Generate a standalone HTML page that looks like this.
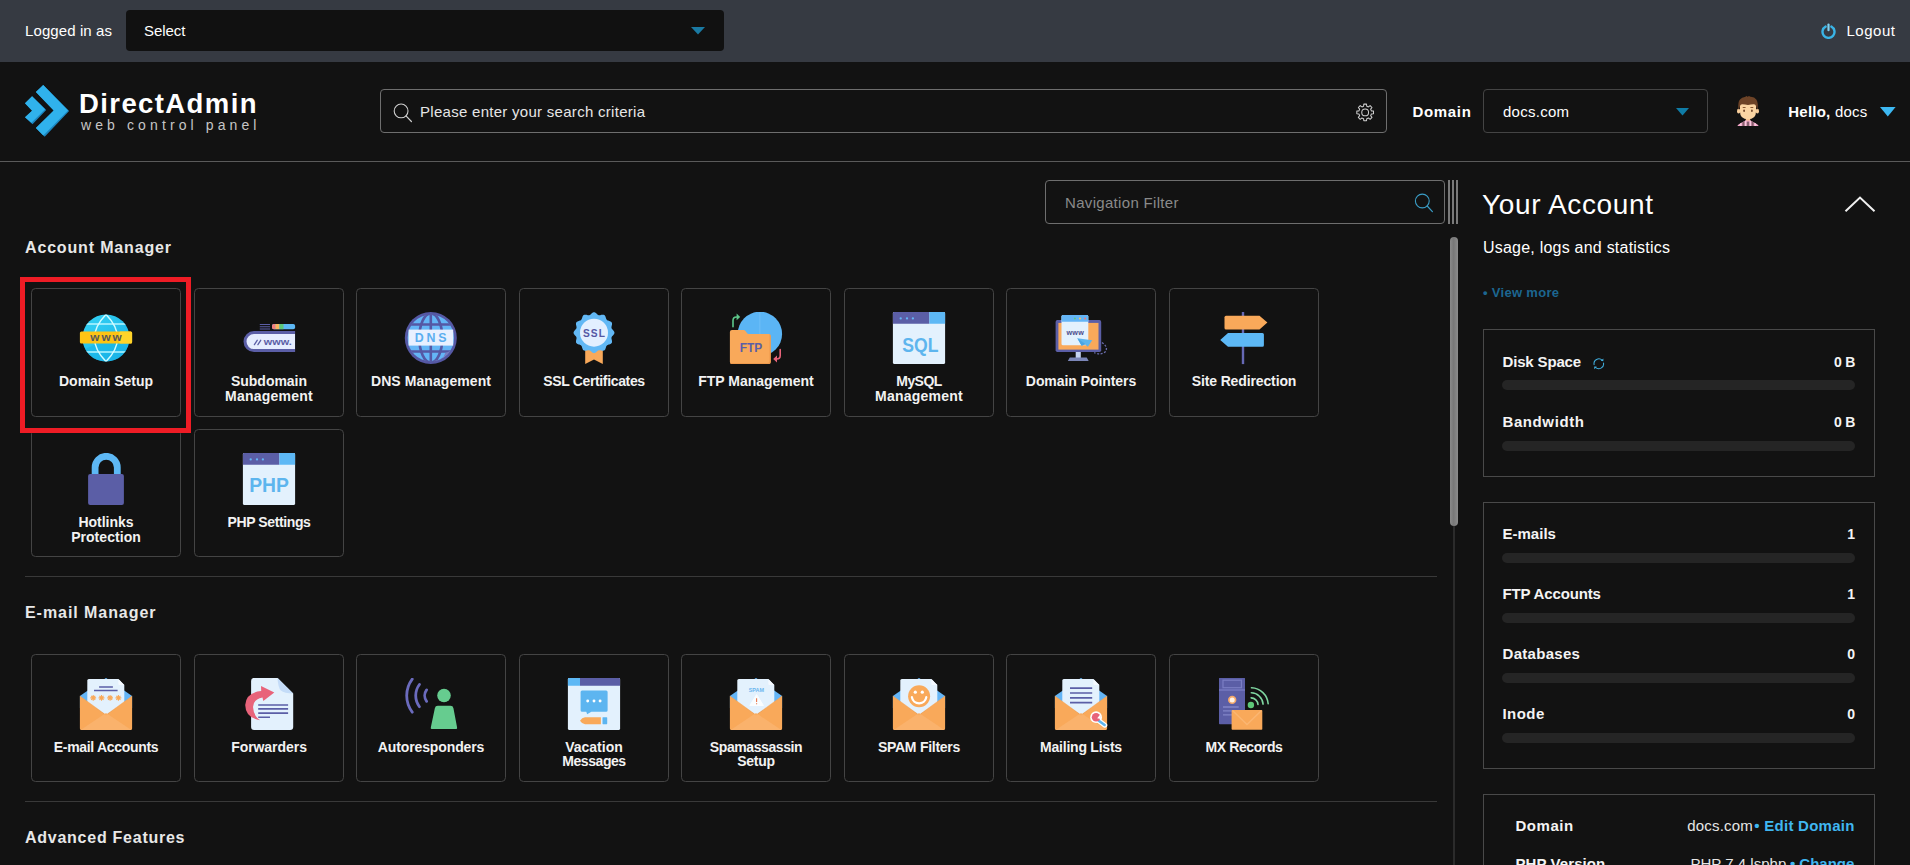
<!DOCTYPE html>
<html lang="en">
<head>
<meta charset="utf-8">
<title>DirectAdmin</title>
<style>
*{box-sizing:border-box;margin:0;padding:0}
html,body{width:1910px;height:865px;overflow:hidden;background:#121212;color:#fff;font-family:"Liberation Sans","DejaVu Sans",sans-serif;}
.abs{position:absolute}
.t{position:absolute;white-space:nowrap;line-height:1}
#topbar{position:absolute;left:0;top:0;width:1910px;height:62px;background:#363a42}
#selbox{position:absolute;left:126px;top:10px;width:598px;height:41px;background:#111;border-radius:4px}
#header{position:absolute;left:0;top:62px;width:1910px;height:100px;background:#121212;border-bottom:1px solid #5a5a5a}
#search{position:absolute;left:380px;top:89px;width:1007px;height:44px;border:1px solid #6e6e6e;border-radius:4px}
#domsel{position:absolute;left:1483px;top:89px;width:225px;height:44px;border:1px solid #444;border-radius:4px}
#navf{position:absolute;left:1045px;top:180px;width:400px;height:44px;border:1px solid #6e6e6e;border-radius:4px}
.tile{position:absolute;width:150px;height:129px;border:1px solid #444;border-radius:4.5px;background:#121212}
.tile .lbl{position:absolute;left:0;width:148px;top:85.2px;text-align:center;font-weight:bold;font-size:14px;line-height:14px;color:#f2f2f2}
.tile svg{position:absolute;left:47px;top:23px;width:54px;height:54px}
.sec{position:absolute;left:25px;font-weight:bold;font-size:16px;letter-spacing:.6px;color:#e8e8e8;white-space:nowrap;line-height:1}
.hr{position:absolute;left:25px;width:1412px;height:1px;background:#393939}
#redbox{position:absolute;left:20px;top:277px;width:171px;height:156px;border:5px solid #ee1c25}
.box{position:absolute;left:1483px;width:392px;border:1px solid #494949}
.bar{position:absolute;width:353px;height:10px;border-radius:5px;background:#252525}
.pl{font-weight:bold;font-size:15px;color:#f4f4f4}
.pv{font-weight:bold;font-size:14px;color:#f4f4f4}
.bl{position:absolute;left:19px;font-weight:bold;font-size:15px;line-height:1;white-space:nowrap;color:#f4f4f4}
.br{position:absolute;right:19px;font-weight:bold;font-size:13px;line-height:1;white-space:nowrap;color:#f4f4f4}
#lia{letter-spacing:0.099px}#seltxt{letter-spacing:-0.041px}#logout{letter-spacing:0.522px}#sph{letter-spacing:0.283px}#domlbl{letter-spacing:0.697px}#domtxt{letter-spacing:0.257px}#hello{letter-spacing:0.23px}#navtxt{letter-spacing:0.319px}#ya{letter-spacing:0.638px}#usage{letter-spacing:0.223px}#vm{letter-spacing:0.303px}#s1{letter-spacing:0.839px}#s2{letter-spacing:0.941px}#s3{letter-spacing:0.743px}#L_domain_0{letter-spacing:-0.011px}#L_subdomain_0{letter-spacing:-0.029px}#L_subdomain_1{letter-spacing:0.236px}#L_dns_0{letter-spacing:0.075px}#L_ssl_0{letter-spacing:-0.342px}#L_ftp_0{letter-spacing:-0.004px}#L_mysql_0{letter-spacing:-0.559px}#L_mysql_1{letter-spacing:0.236px}#L_pointers_0{letter-spacing:-0.061px}#L_redirect_0{letter-spacing:-0.126px}#L_hotlink_0{letter-spacing:-0.033px}#L_hotlink_1{letter-spacing:0.052px}#L_php_0{letter-spacing:-0.387px}#L_email_0{letter-spacing:-0.312px}#L_forward_0{letter-spacing:-0.05px}#L_autoresp_0{letter-spacing:-0.117px}#L_vacation_0{letter-spacing:-0.013px}#L_vacation_1{letter-spacing:-0.434px}#L_spamass_0{letter-spacing:-0.418px}#L_spamass_1{letter-spacing:-0.298px}#L_spamf_0{letter-spacing:-0.265px}#L_mlist_0{letter-spacing:-0.233px}#L_mx_0{letter-spacing:-0.402px}#disk{letter-spacing:-0.161px}#bw{letter-spacing:0.593px}#ob1{letter-spacing:-0.248px}#ob2{letter-spacing:-0.248px}#emails{letter-spacing:0.007px}#ftpacc{letter-spacing:-0.147px}#dbs{letter-spacing:0.294px}#inode{letter-spacing:0.45px}#dom3{letter-spacing:0.517px}#docscom{letter-spacing:0.185px}#editdom{letter-spacing:0.265px}#phpver{letter-spacing:0.076px}#php74{letter-spacing:0.023px}#change{letter-spacing:0.009px}#lg1{letter-spacing:1.4px}#lg2{letter-spacing:4.109px}
</style>
</head>
<body>
<div id="topbar">
  <div class="t" id="lia" style="left:25px;top:23px;font-size:15px">Logged in as</div>
  <div id="selbox"><div class="t" id="seltxt" style="left:18px;top:13px;font-size:15px">Select</div>
    <svg class="abs" style="left:565px;top:17px" width="14" height="8" viewBox="0 0 14 8"><path d="M0 0h14L7 7.5z" fill="#1a7aa3"/></svg>
  </div>
  <svg class="abs" style="left:1820px;top:22.200px" width="17" height="17" viewBox="0 0 17 17"><path d="M5.6 4.6A6 6 0 1 0 11.4 4.6" fill="none" stroke="#3ab4e6" stroke-width="2.4" stroke-linecap="round"/><path d="M8.500 2.600V8.200" stroke="#7fd0f0" stroke-width="2.2" stroke-linecap="round"/></svg>
  <div class="t" id="logout" style="left:1846.5px;top:23px;font-size:15px">Logout</div>
</div>
<div id="header"></div>
<div id="search"><svg class="abs" style="left:10px;top:11px" width="24" height="24" viewBox="0 0 24 24"><circle cx="10.1" cy="9.9" r="6.9" fill="none" stroke="#cfcfcf" stroke-width="1.1"/><path d="M15 14.9l5.4 5.6" stroke="#cfcfcf" stroke-width="1.2" stroke-linecap="round"/></svg>
<svg class="abs" style="left:973.3px;top:10.7px" width="23.3" height="23.3" viewBox="0 0 24 24"><g fill="none" stroke="#d0d0d0" stroke-width="1.05" stroke-linejoin="round"><circle cx="11.5" cy="11.8" r="3.5"/><path d="M9.87 5.41 L10.11 3.21 L12.89 3.21 L13.13 5.41 L14.87 6.12 L16.59 4.75 L18.55 6.71 L17.18 8.43 L17.89 10.17 L20.09 10.41 L20.09 13.19 L17.89 13.43 L17.18 15.17 L18.55 16.89 L16.59 18.85 L14.87 17.48 L13.13 18.19 L12.89 20.39 L10.11 20.39 L9.87 18.19 L8.13 17.48 L6.41 18.85 L4.45 16.89 L5.82 15.17 L5.11 13.43 L2.91 13.19 L2.91 10.41 L5.11 10.17 L5.82 8.43 L4.45 6.71 L6.41 4.75 L8.13 6.12Z"/></g></svg><div class="t" id="sph" style="left:39px;top:14px;font-size:15px;color:#e6e6e6">Please enter your search criteria</div></div>
<div class="t" id="domlbl" style="left:1412.4px;top:104px;font-size:15px;font-weight:bold">Domain</div>
<div id="domsel"><svg class="abs" style="left:192px;top:17.5px" width="13" height="8" viewBox="0 0 13 8"><path d="M0 0h13L6.5 7.5z" fill="#0f7ca6"/></svg><div class="t" id="domtxt" style="left:19px;top:14px;font-size:15px">docs.com</div></div>
<div class="t" id="hello" style="left:1788.3px;top:104px;font-size:15px"><b>Hello,</b> docs</div>

<svg class="abs" style="left:1880px;top:106.5px" width="16" height="10" viewBox="0 0 16 10"><path d="M0 0h15.6L7.8 9.6z" fill="#3db8f2"/></svg>
<svg class="abs" style="left:1737px;top:96px" width="22" height="30" viewBox="0 0 22 30"><defs><clipPath id="shirtc"><path d="M0.2 30.2Q1 28.5 3.5 27.2L8.6 24.4h4.8l5.1 2.8Q21 28.5 21.8 30.2z"/></clipPath></defs>
<ellipse cx="1.6" cy="15.2" rx="1.6" ry="2.4" fill="#f9cf9c"/><ellipse cx="20.4" cy="15.2" rx="1.6" ry="2.4" fill="#f9cf9c"/>
<path d="M8.8 21h4.4v4.2h-4.4z" fill="#f6c18e"/>
<path d="M3 9.5Q3 7.6 5 7.6h12Q19 7.6 19 9.5V16Q19 23.2 11 23.2Q3 23.2 3 16z" fill="#fbd5a3"/>
<path d="M1.4 13.6Q0.6 6 3 3.4Q5 .8 8 .9L9.4.1l1.2.6L12 0l1.4.8Q17.400 .6 19.3 3.400Q21.400 6.400 20.600 13.600Q19.600 13 19.200 10.400Q19 8.200 16.800 8.200Q14 8.200 11 9Q8 8.200 5.200 8.200Q3 8.200 2.800 10.400Q2.400 13 1.400 13.600z" fill="#6d4327"/>
<rect x="5.6" y="11" width="3.1" height="1" rx=".5" fill="#8a5a34"/><rect x="13.3" y="11" width="3.1" height="1" rx=".5" fill="#8a5a34"/>
<ellipse cx="7.1" cy="14.7" rx=".9" ry="1.3" fill="#6d4327"/><ellipse cx="14.900" cy="14.700" rx=".9" ry="1.3" fill="#6d4327"/>
<g clip-path="url(#shirtc)"><rect x="0" y="24" width="22" height="7" fill="#f3a7c9"/><rect x="5.3" y="24" width="2.200" height="7" fill="#86606e"/><rect x="9.7" y="25.6" width="2.6" height="6" fill="#86606e"/><rect x="14.500" y="24" width="2.200" height="7" fill="#86606e"/><rect x="3.2" y="24" width="1" height="7" fill="#fbd3e4"/><rect x="8.2" y="24" width="1" height="7" fill="#fbd3e4"/><rect x="12.8" y="24" width="1" height="7" fill="#fbd3e4"/><rect x="17.8" y="24" width="1" height="7" fill="#fbd3e4"/></g>
</svg>
<svg class="abs" style="left:22px;top:82px" width="50" height="58" viewBox="22 82 50 58"><path d="M32.100 96.300L46.200 110 32.500 124.200 25 117.300 32.100 110.800 25 103.200z" fill="#1c86c0"/><path d="M32.100 96.300L45.100 109.200 31.400 122.800 25 117.300 32.100 110.800 25 103.200z" fill="#30b2ec"/>
<path d="M43.200 85L69.100 111 44.700 136.800 35.900 128 53.700 110.400 35.900 92.100z" fill="#1c86c0"/><path d="M43.200 85L68 110.400 43.300 135.400 35.900 128 53.700 110.400 35.900 92.100z" fill="#30b2ec"/></svg>
<div class="t" id="lg1" style="left:79px;top:90.2px;font-size:27.5px;font-weight:bold;color:#fff">DirectAdmin</div>
<div class="t" id="lg2" style="left:81px;top:118px;font-size:14px;color:#c6c6c6">web control panel</div>
<div id="navf"><svg class="abs" style="left:366px;top:10px" width="24" height="24" viewBox="0 0 24 24"><circle cx="10.3" cy="10" r="6.9" fill="none" stroke="#3a9dc6" stroke-width="1.1"/><path d="M15.2 15l5.2 5.6" stroke="#3a9dc6" stroke-width="1.2" stroke-linecap="round"/></svg><div class="t" id="navtxt" style="left:19px;top:14px;font-size:15px;color:#8a8a8a">Navigation Filter</div></div>

<div class="abs" style="left:1448px;top:180px;width:2px;height:44px;background:#7a7a7a"></div>
<div class="abs" style="left:1452px;top:180px;width:2px;height:44px;background:#7a7a7a"></div>
<div class="abs" style="left:1456px;top:180px;width:2px;height:44px;background:#7a7a7a"></div>
<div class="abs" style="left:1453px;top:237px;width:2px;height:628px;background:#2b2b2b"></div>
<div class="abs" style="left:1450.3px;top:237px;width:7.6px;height:289px;border-radius:4px;background:linear-gradient(90deg,#8a8a8a,#787878 45%,#8c8c8c)"></div>
<svg class="abs" style="left:1842px;top:193px" width="36" height="22" viewBox="0 0 36 22"><path d="M3.5 18.3L18 4.6 32.5 18.3" fill="none" stroke="#f0f0f0" stroke-width="2"/></svg>
<div class="sec" id="s1" style="top:239.6px">Account Manager</div>
<div class="hr" style="top:576px"></div>
<div class="sec" id="s2" style="top:604.7px">E-mail Manager</div>
<div class="hr" style="top:801px"></div>
<div class="sec" id="s3" style="top:829.5px">Advanced Features</div>

<div id="tiles">
<div class="tile" style="left:31px;top:288px;height:129px"><svg viewBox="0 0 54 54"><defs><clipPath id="gc1"><circle cx="27" cy="26" r="23.600"/></clipPath><linearGradient id="gg1" x1="0" y1="0" x2="1" y2="1"><stop offset="0" stop-color="#35d3f5"/><stop offset="1" stop-color="#18b0e6"/></linearGradient></defs>
<circle cx="27" cy="26" r="23.600" fill="url(#gg1)"/>
<g clip-path="url(#gc1)"><path d="M0 40L30 26 54 40V54H0z" fill="#19b4e8" opacity=".6"/><path d="M0 12h54M0 40h54" stroke="#b5f5ff" stroke-width="1.700"/><path d="M27 2.400Q50 26 27 49.600Q4 26 27 2.400z" fill="none" stroke="#d2fbff" stroke-width="1.400"/></g>
<rect x=".9" y="19.600" width="52.200" height="11.800" rx="1.500" fill="#ffc414"/><rect x="40" y="19.600" width="13.100" height="11.800" rx="1.500" fill="#ffd42a"/>
<text x="28" y="29.300" text-anchor="middle" font-family="Liberation Sans,sans-serif" font-weight="bold" font-size="11.800" letter-spacing="2" fill="#595959">www</text></svg><div class="lbl" style="top:84.5px;line-height:15px"><span id="L_domain_0">Domain Setup</span></div></div>
<div class="tile" style="left:194px;top:288px;height:129px"><svg viewBox="0 0 54 54"><path d="M54.600 20.600H12A9 9 0 0 0 12 38.600H54.600z" fill="#e6edff" stroke="#5b5ea6" stroke-width="3"/>
<rect x="53.100" y="19" width="3" height="21.500" fill="#121212"/>
<path d="M17.800 12.500h10.200M17.800 14.800h10.200M17.800 17h10.200" stroke="#5b5ea6" stroke-width="1.100"/>
<rect x="30" y="12" width="23.100" height="5.200" rx="1.800" fill="#5db8f5"/><path d="M31.800 12h1.700v5.200h-1.700a1.800 1.800 0 0 1-1.800-1.800v-1.600a1.800 1.800 0 0 1 1.800-1.800z" fill="#f27c7c"/><rect x="33.500" y="12" width="4" height="5.200" fill="#f9b55f"/><rect x="37.500" y="12" width="4" height="5.200" fill="#5dc878"/>
<path d="M12.400 32.600L15.200 28.300M15.900 32.600L18.700 28.300" stroke="#5b5ea6" stroke-width="1.300" stroke-linecap="round"/><text x="21.800" y="32.700" font-family="Liberation Sans,sans-serif" font-weight="bold" font-size="8.600" textLength="28" lengthAdjust="spacingAndGlyphs" fill="#5b5ea6">www.</text></svg><div class="lbl" style="top:84.5px;line-height:15px"><span id="L_subdomain_0">Subdomain</span><br><span id="L_subdomain_1">Management</span></div></div>
<div class="tile" style="left:356px;top:288px;height:129px"><svg viewBox="0 0 54 54"><defs><clipPath id="dc1"><circle cx="26.800" cy="26" r="23.500"/></clipPath></defs>
<circle cx="26.800" cy="26" r="26" fill="#5558a4"/><circle cx="26.800" cy="26" r="23.200" fill="#64b5f6"/>
<g clip-path="url(#dc1)" fill="none" stroke="#5558a4" stroke-width="2.600"><path d="M26.800 0v52M0 12.500h54M0 39.500h54"/><ellipse cx="26.800" cy="26" rx="11.500" ry="24.500"/><path d="M30 50Q40 49 42 42Q46 40 50 39" stroke="#7a7cc0" stroke-width="2"/></g>
<rect x="4.600" y="17.600" width="44.600" height="16" fill="#e8f0ff"/>
<text x="28" y="30.200" text-anchor="middle" font-family="Liberation Sans,sans-serif" font-weight="bold" font-size="12.400" letter-spacing="2.700" fill="#5aaef0">DNS</text></svg><div class="lbl" style="top:84.5px;line-height:15px"><span id="L_dns_0">DNS Management</span></div></div>
<div class="tile" style="left:519px;top:288px;height:129px"><svg viewBox="0 0 54 54"><path d="M18.200 36h17.600v16.100L27 47.600 18.200 52.100z" fill="#f9a95a"/>
<path d="M27.00 0.25L27.53 0.31L28.06 0.50L28.57 0.79L29.05 1.15L29.52 1.57L29.96 1.99L30.39 2.39L30.82 2.73L31.25 3.00L31.70 3.17L32.17 3.24L32.68 3.23L33.22 3.14L33.79 3.01L34.39 2.87L34.99 2.74L35.60 2.67L36.18 2.67L36.73 2.78L37.22 2.99L37.66 3.31L38.02 3.73L38.31 4.24L38.55 4.80L38.75 5.39L38.92 5.98L39.10 6.54L39.29 7.05L39.53 7.49L39.83 7.87L40.21 8.17L40.65 8.41L41.16 8.60L41.72 8.78L42.31 8.95L42.90 9.15L43.46 9.39L43.97 9.68L44.39 10.04L44.71 10.47L44.92 10.97L45.03 11.52L45.03 12.10L44.96 12.71L44.83 13.31L44.69 13.91L44.56 14.48L44.47 15.02L44.46 15.53L44.53 16.00L44.70 16.45L44.97 16.88L45.31 17.31L45.71 17.74L46.13 18.18L46.55 18.65L46.91 19.13L47.20 19.64L47.39 20.17L47.45 20.70L47.39 21.23L47.20 21.76L46.91 22.27L46.55 22.75L46.13 23.22L45.71 23.66L45.31 24.09L44.97 24.52L44.70 24.95L44.53 25.40L44.46 25.87L44.47 26.38L44.56 26.92L44.69 27.49L44.83 28.09L44.96 28.69L45.03 29.30L45.03 29.88L44.92 30.43L44.71 30.92L44.39 31.36L43.97 31.72L43.46 32.01L42.90 32.25L42.31 32.45L41.72 32.62L41.16 32.80L40.65 32.99L40.21 33.23L39.83 33.53L39.53 33.91L39.29 34.35L39.10 34.86L38.92 35.42L38.75 36.01L38.55 36.60L38.31 37.16L38.02 37.67L37.66 38.09L37.22 38.41L36.73 38.62L36.18 38.73L35.60 38.73L34.99 38.66L34.39 38.53L33.79 38.39L33.22 38.26L32.68 38.17L32.17 38.16L31.70 38.23L31.25 38.40L30.82 38.67L30.39 39.01L29.96 39.41L29.52 39.83L29.05 40.25L28.57 40.61L28.06 40.90L27.53 41.09L27.00 41.15L26.47 41.09L25.94 40.90L25.43 40.61L24.95 40.25L24.48 39.83L24.04 39.41L23.61 39.01L23.18 38.67L22.75 38.40L22.30 38.23L21.83 38.16L21.32 38.17L20.78 38.26L20.21 38.39L19.61 38.53L19.01 38.66L18.40 38.73L17.82 38.73L17.27 38.62L16.78 38.41L16.34 38.09L15.98 37.67L15.69 37.16L15.45 36.60L15.25 36.01L15.08 35.42L14.90 34.86L14.71 34.35L14.47 33.91L14.17 33.53L13.79 33.23L13.35 32.99L12.84 32.80L12.28 32.62L11.69 32.45L11.10 32.25L10.54 32.01L10.03 31.72L9.61 31.36L9.29 30.93L9.08 30.43L8.97 29.88L8.97 29.30L9.04 28.69L9.17 28.09L9.31 27.49L9.44 26.92L9.53 26.38L9.54 25.87L9.47 25.40L9.30 24.95L9.03 24.52L8.69 24.09L8.29 23.66L7.87 23.22L7.45 22.75L7.09 22.27L6.80 21.76L6.61 21.23L6.55 20.70L6.61 20.17L6.80 19.64L7.09 19.13L7.45 18.65L7.87 18.18L8.29 17.74L8.69 17.31L9.03 16.88L9.30 16.45L9.47 16.00L9.54 15.53L9.53 15.02L9.44 14.48L9.31 13.91L9.17 13.31L9.04 12.71L8.97 12.10L8.97 11.52L9.08 10.97L9.29 10.47L9.61 10.04L10.03 9.68L10.54 9.39L11.10 9.15L11.69 8.95L12.28 8.78L12.84 8.60L13.35 8.41L13.79 8.17L14.17 7.87L14.47 7.49L14.71 7.05L14.90 6.54L15.08 5.98L15.25 5.39L15.45 4.80L15.69 4.24L15.98 3.73L16.34 3.31L16.78 2.99L17.27 2.78L17.82 2.67L18.40 2.67L19.01 2.74L19.61 2.87L20.21 3.01L20.78 3.14L21.32 3.23L21.83 3.24L22.30 3.17L22.75 3.00L23.18 2.73L23.61 2.39L24.04 1.99L24.48 1.57L24.95 1.15L25.43 0.79L25.94 0.50L26.47 0.31Z" fill="#62b8f5"/>
<circle cx="27" cy="20.7" r="14" fill="#e3efff"/>
<text x="27.500" y="24.500" text-anchor="middle" font-family="Liberation Sans,sans-serif" font-weight="bold" font-size="10.200" letter-spacing="1" fill="#5558a4">SSL</text></svg><div class="lbl" style="top:84.5px;line-height:15px"><span id="L_ssl_0">SSL Certificates</span></div></div>
<div class="tile" style="left:681px;top:288px;height:129px"><svg viewBox="0 0 54 54"><circle cx="30.900" cy="21.900" r="22.200" fill="#5bb5f5"/><path d="M30.900 0v30" stroke="#74c1f7" stroke-width=".8"/>
<path d="M.9 20a2 2 0 0 1 2-2h11.600a2.500 2.500 0 0 1 2 1l1.600 2.200a2 2 0 0 0 1.600.8H39.700a2 2 0 0 1 2 2V50.100a2 2 0 0 1-2 2H2.900a2 2 0 0 1-2-2z" fill="#f9a95a"/><path d="M40.500 22.200a2 2 0 0 1 1.200 1.800V50.100a2 2 0 0 1-2 2H2.900a2 2 0 0 1-1.800-1.100H38.500a2 2 0 0 0 2-2z" fill="#ef9a4c"/>
<text x="22" y="40.400" text-anchor="middle" font-family="Liberation Sans,sans-serif" font-weight="bold" font-size="13.200" textLength="22.500" lengthAdjust="spacingAndGlyphs" fill="#5b5ea6">FTP</text>
<path d="M4 14.800V8.500Q4 5 7.500 5H9" fill="none" stroke="#5dc88a" stroke-width="1.600" stroke-linecap="round"/><path d="M7.600 1.400L11.200 4.900 7.600 8.200z" fill="#5dc88a"/>
<path d="M51.200 37.600V43.500Q51.200 47 47.700 47H46.800" fill="none" stroke="#e8637a" stroke-width="1.600" stroke-linecap="round"/><path d="M48 43.600L44.200 47 48 50.400z" fill="#e8637a"/></svg><div class="lbl" style="top:84.5px;line-height:15px"><span id="L_ftp_0">FTP Management</span></div></div>
<div class="tile" style="left:844px;top:288px;height:129px"><svg viewBox="0 0 54 54"><rect x=".9" y="-.1" width="52.200" height="52.200" rx="1.600" fill="#e3f1fd"/><path d="M.9 11.700V1.500A1.600 1.600 0 0 1 2.500-.1H37.400V11.700z" fill="#5b5ea6"/><path d="M37.400-.1H51.500A1.600 1.600 0 0 1 53.100 1.500V11.700H37.400z" fill="#5db8f5"/>
<circle cx="8.700" cy="6.400" r="1.150" fill="#64b5f6"/><circle cx="15" cy="6.400" r="1.150" fill="#64b5f6"/><circle cx="20.900" cy="6.400" r="1.150" fill="#64b5f6"/>
<text x="10.300" y="39.500" font-family="Liberation Sans,sans-serif" font-weight="bold" font-size="20.500" textLength="36.200" lengthAdjust="spacingAndGlyphs" fill="#5db5ee">SQL</text></svg><div class="lbl" style="top:84.5px;line-height:15px"><span id="L_mysql_0">MySQL</span><br><span id="L_mysql_1">Management</span></div></div>
<div class="tile" style="left:1006px;top:288px;height:129px"><svg viewBox="0 0 54 54"><rect x="21.700" y="39" width="5.100" height="7" fill="#c5d3f0"/><path d="M15.800 45.500h16.900l2 3.500H13.800z" fill="#7b86b8"/>
<rect x="1.600" y="8.100" width="45.600" height="31.900" rx="1.800" fill="#5b5ea6"/><rect x="4.400" y="10.900" width="40.100" height="26.700" fill="#f9a95a"/>
<rect x="7.500" y="3" width="26.800" height="30.300" rx="1.500" fill="#e3f1fd"/><path d="M7.500 9.700V4.500A1.500 1.500 0 0 1 9 3H32.800a1.500 1.500 0 0 1 1.500 1.500V9.700z" fill="#64b5f6"/>
<circle cx="20.900" cy="6.500" r="1" fill="#5dc88a"/><circle cx="26" cy="6.500" r="1" fill="#f9c35f"/><circle cx="31.100" cy="6.500" r="1" fill="#f27c7c"/>
<text x="21.300" y="23" text-anchor="middle" font-family="Liberation Sans,sans-serif" font-weight="bold" font-size="7.200" letter-spacing=".3" fill="#4a4d8a">www</text>
<path d="M23.300 26.200L38.200 28.200 33.900 34.800 31.200 32.300 27.600 33.700z" fill="#5db5ee"/><path d="M23.300 26.200L33.900 34.800 31.200 32.300z" fill="#3d96d6"/><path d="M23.300 26.200L31.200 32.300 27.600 33.700z" fill="#4aa5e4"/>
<path d="M48 30.500Q54.500 35 51.500 39.500Q48 43.500 40.200 40.700" fill="none" stroke="#6b6eae" stroke-width="1.300" stroke-dasharray="2 1.600"/></svg><div class="lbl" style="top:84.5px;line-height:15px"><span id="L_pointers_0">Domain Pointers</span></div></div>
<div class="tile" style="left:1169px;top:288px;height:129px"><svg viewBox="0 0 54 54"><rect x="24.800" y="-.1" width="2.400" height="52.200" fill="#6668b4"/>
<path d="M9 3.800H42.500L50.400 10.600 42.500 17.500H9A1.500 1.500 0 0 1 7.500 16V5.300A1.500 1.500 0 0 1 9 3.800z" fill="#f9a95a"/>
<path d="M45.400 21H11L3.200 27.900 11 34.800H45.400a1.500 1.500 0 0 0 1.500-1.500V22.500a1.500 1.500 0 0 0-1.500-1.500z" fill="#5db8f5"/></svg><div class="lbl" style="top:84.5px;line-height:15px"><span id="L_redirect_0">Site Redirection</span></div></div>
<div class="tile" style="left:31px;top:429px;height:128px"><svg viewBox="0 0 54 54"><path d="M16.100 23V14.400a11.100 11.100 0 0 1 22.200 0V23" fill="none" stroke="#5db8f5" stroke-width="6.800"/>
<rect x="9.100" y="21.100" width="35.800" height="31" rx="2" fill="#5b5ea6"/></svg><div class="lbl" style="top:84.5px;line-height:15px"><span id="L_hotlink_0">Hotlinks</span><br><span id="L_hotlink_1">Protection</span></div></div>
<div class="tile" style="left:194px;top:429px;height:128px"><svg viewBox="0 0 54 54"><rect x=".9" y="-.1" width="52.200" height="52.200" rx="1.600" fill="#e3f1fd"/><path d="M.9 11.700V1.500A1.600 1.600 0 0 1 2.500-.1H37.400V11.700z" fill="#5b5ea6"/><path d="M37.400-.1H51.500A1.600 1.600 0 0 1 53.100 1.500V11.700H37.400z" fill="#5db8f5"/>
<circle cx="8.700" cy="6.400" r="1.150" fill="#64b5f6"/><circle cx="15" cy="6.400" r="1.150" fill="#64b5f6"/><circle cx="20.900" cy="6.400" r="1.150" fill="#64b5f6"/>
<text x="7.200" y="39.200" font-family="Liberation Sans,sans-serif" font-weight="bold" font-size="20" textLength="39.700" lengthAdjust="spacingAndGlyphs" fill="#5db5ee">PHP</text></svg><div class="lbl" style="top:84.5px;line-height:15px"><span id="L_php_0">PHP Settings</span></div></div>
<div class="tile" style="left:31px;top:654px;height:128px"><svg viewBox="0 0 54 54"><defs><clipPath id="ece"><path d="M0-2H54V19L27 37.200 0 19z"/></clipPath></defs>
<path d="M.9 18L27-.1 53.100 18V30H.9z" fill="#64b5f6"/>
<g clip-path="url(#ece)"><path d="M9.800 1H39.400L45.300 6.900V40H8.300V2.500A1.500 1.500 0 0 1 9.800 1z" fill="#e3f1fd"/><path d="M39.400 1L45.300 6.900H40.400a1 1 0 0 1-1-1z" fill="#f4f9ff"/><path d="M20.100 8.900H33.900M15 12.400H38.600" stroke="#5b5ea6" stroke-width="1.500"/><path d="M11.30 19.90L17.10 19.90M12.15 17.85L16.25 21.95M14.20 17.00L14.20 22.80M16.25 17.85L12.15 21.95M19.60 19.90L25.40 19.90M20.45 17.85L24.55 21.95M22.50 17.00L22.50 22.80M24.55 17.85L20.45 21.95M28.20 19.90L34.00 19.90M29.05 17.85L33.15 21.95M31.10 17.00L31.10 22.80M33.15 17.85L29.05 21.95M36.50 19.90L42.30 19.90M37.35 17.85L41.45 21.95M39.40 17.00L39.40 22.80M41.45 17.85L37.35 21.95" stroke="#f9a95a" stroke-width="1.100"/></g>
<path d="M.9 18L27 37 53.100 18V50.600a1.500 1.500 0 0 1-1.500 1.500H2.400A1.500 1.500 0 0 1 .9 50.600z" fill="#f9a95a"/>
<path d="M2 51.800L27 35 52 51.800a1.500 1.500 0 0 1-.4.300H2.400a1.500 1.500 0 0 1-.4-.300z" fill="#fab26c"/>
<path d="M.9 18L27 37 53.100 18" fill="none" stroke="#f6a252" stroke-width=".5"/>
</svg><div class="lbl" style="top:85px;line-height:14px"><span id="L_email_0">E-mail Accounts</span></div></div>
<div class="tile" style="left:194px;top:654px;height:128px"><svg viewBox="0 0 54 54"><path d="M12.100-.1H35.500L51.200 15.600V49.100a3 3 0 0 1-3 3H12.100a3 3 0 0 1-3-3V2.900a3 3 0 0 1 3-3z" fill="#e3f1fd"/><path d="M35.500-.1L51.200 15.600Q42.500 15.200 38.800 12.400Q36 9.500 35.500-.1z" fill="#c4dcf8"/>
<path d="M16.200 27H46.100M16.200 30.900H46.100M16.200 35.100H46.100M16.200 39.200H28" stroke="#5b5ea6" stroke-width="1.600"/>
<path d="M18.200 42.300Q3.500 40 3.200 27Q4 14.500 19.200 13L19 8.100 32.300 14.400 21.300 23 20.500 19.500Q11.500 21 11 29Q11.500 38 18.200 42.300z" fill="#e8637a"/></svg><div class="lbl" style="top:85px;line-height:14px"><span id="L_forward_0">Forwarders</span></div></div>
<div class="tile" style="left:356px;top:654px;height:128px"><svg viewBox="0 0 54 54"><path d="M22.61 11.88A9.5 9.5 0 0 0 22.61 23.32M15.43 6.47A18.5 18.5 0 0 0 15.43 28.73M8.24 1.05A27.5 27.5 0 0 0 8.24 34.15" fill="none" stroke="#6b6bbd" stroke-width="2.800" stroke-linecap="round"/>
<circle cx="40" cy="17.500" r="6.800" fill="#66cc8f"/><path d="M33.800 27.800H46.500a3 3 0 0 1 2.950 2.400L53.100 49.500a1.200 1.200 0 0 1-1.200 1.500H28a1.200 1.200 0 0 1-1.200-1.500L30.850 30.200a3 3 0 0 1 2.950-2.400z" fill="#66cc8f"/></svg><div class="lbl" style="top:85px;line-height:14px"><span id="L_autoresp_0">Autoresponders</span></div></div>
<div class="tile" style="left:519px;top:654px;height:128px"><svg viewBox="0 0 54 54"><rect x=".9" y="-.1" width="52.200" height="52.200" rx="1.600" fill="#e3f1fd"/><path d="M13-.1H51.500A1.600 1.600 0 0 1 53.100 1.500V7.700H13z" fill="#5b5ea6"/><path d="M.9 7.700V1.500A1.600 1.600 0 0 1 2.500-.1H13V7.700z" fill="#5db8f5"/>
<path d="M15.100 12.600H39.100a1.500 1.500 0 0 1 1.500 1.500V32.200a1.500 1.500 0 0 1-1.500 1.500H24.400L20.100 36.200 19.300 33.700H15.100a1.500 1.500 0 0 1-1.500-1.500V14.100a1.500 1.500 0 0 1 1.500-1.500z" fill="#5db5f0"/>
<circle cx="20.700" cy="23" r="1.450" fill="#fff"/><circle cx="27" cy="23" r="1.450" fill="#fff"/><circle cx="33.100" cy="23" r="1.450" fill="#fff"/>
<path d="M13 42.700Q15 39.500 18 39.200H33.900V46.200H18Q15 45.900 13 42.700z" fill="#f9a95a"/><rect x="35.500" y="39.200" width="4.700" height="7" rx=".6" fill="#5db5f0"/></svg><div class="lbl" style="top:85px;line-height:14px"><span id="L_vacation_0">Vacation</span><br><span id="L_vacation_1">Messages</span></div></div>
<div class="tile" style="left:681px;top:654px;height:128px"><svg viewBox="0 0 54 54"><defs><clipPath id="ecs"><path d="M0-2H54V19L27 37.200 0 19z"/></clipPath></defs>
<path d="M.9 18L27-.1 53.100 18V30H.9z" fill="#64b5f6"/>
<g clip-path="url(#ecs)"><path d="M9.800 1H39.400L45.300 6.900V40H8.300V2.500A1.500 1.500 0 0 1 9.800 1z" fill="#e3f1fd"/><path d="M39.400 1L45.300 6.900H40.400a1 1 0 0 1-1-1z" fill="#f4f9ff"/><text x="27.400" y="13.700" text-anchor="middle" font-family="Liberation Sans,sans-serif" font-weight="bold" font-size="5.800" textLength="15.300" lengthAdjust="spacingAndGlyphs" fill="#6bb5ee">SPAM</text><path d="M27.600 16.600L34.400 27.500H20.800z" fill="#fafdff" stroke="#fafdff" stroke-width="1" stroke-linejoin="round"/><path d="M27.600 20.200v3.800M27.600 25.300v.9" stroke="#e8764a" stroke-width="1.100"/></g>
<path d="M.9 18L27 37 53.100 18V50.600a1.500 1.500 0 0 1-1.500 1.500H2.400A1.500 1.500 0 0 1 .9 50.600z" fill="#f9a95a"/>
<path d="M2 51.800L27 35 52 51.800a1.500 1.500 0 0 1-.4.300H2.400a1.500 1.500 0 0 1-.4-.300z" fill="#fab26c"/>
<path d="M.9 18L27 37 53.100 18" fill="none" stroke="#f6a252" stroke-width=".5"/>
</svg><div class="lbl" style="top:85px;line-height:14px"><span id="L_spamass_0">Spamassassin</span><br><span id="L_spamass_1">Setup</span></div></div>
<div class="tile" style="left:844px;top:654px;height:128px"><svg viewBox="0 0 54 54"><defs><clipPath id="ecf"><path d="M0-2H54V19L27 37.200 0 19z"/></clipPath></defs>
<path d="M.9 18L27-.1 53.100 18V30H.9z" fill="#64b5f6"/>
<g clip-path="url(#ecf)"><path d="M9.800 1H39.400L45.300 6.900V40H8.300V2.500A1.500 1.500 0 0 1 9.800 1z" fill="#e3f1fd"/><path d="M39.400 1L45.300 6.900H40.400a1 1 0 0 1-1-1z" fill="#f4f9ff"/><circle cx="27.100" cy="18.200" r="11" fill="#f9a95a"/><circle cx="23.300" cy="14.200" r="1.600" fill="#fff"/><circle cx="30.300" cy="14.200" r="1.600" fill="#fff"/><path d="M19.900 19.200a7.300 7.300 0 0 0 14.400 0" fill="none" stroke="#fff" stroke-width="2.200" stroke-linecap="round"/></g>
<path d="M.9 18L27 37 53.100 18V50.600a1.500 1.500 0 0 1-1.500 1.500H2.400A1.500 1.500 0 0 1 .9 50.600z" fill="#f9a95a"/>
<path d="M2 51.800L27 35 52 51.800a1.500 1.500 0 0 1-.4.300H2.400a1.500 1.500 0 0 1-.4-.300z" fill="#fab26c"/>
<path d="M.9 18L27 37 53.100 18" fill="none" stroke="#f6a252" stroke-width=".5"/>
</svg><div class="lbl" style="top:85px;line-height:14px"><span id="L_spamf_0">SPAM Filters</span></div></div>
<div class="tile" style="left:1006px;top:654px;height:128px"><svg viewBox="0 0 54 54"><defs><clipPath id="ecm"><path d="M0-2H54V19L27 37.200 0 19z"/></clipPath></defs>
<path d="M.9 18L27-.1 53.100 18V30H.9z" fill="#64b5f6"/>
<g clip-path="url(#ecm)"><path d="M9.800 1H39.400L45.300 6.900V40H8.300V2.500A1.500 1.500 0 0 1 9.800 1z" fill="#e3f1fd"/><path d="M39.400 1L45.300 6.900H40.400a1 1 0 0 1-1-1z" fill="#f4f9ff"/><path d="M16 10.200H38.200M16 15H38.200M16 19.900H38.200M16 24.600H38.200" stroke="#5b5ea6" stroke-width="1.700"/></g>
<path d="M.9 18L27 37 53.100 18V50.600a1.500 1.500 0 0 1-1.500 1.500H2.400A1.500 1.500 0 0 1 .9 50.600z" fill="#f9a95a"/>
<path d="M2 51.800L27 35 52 51.800a1.500 1.500 0 0 1-.4.300H2.400a1.500 1.500 0 0 1-.4-.300z" fill="#fab26c"/>
<path d="M.9 18L27 37 53.100 18" fill="none" stroke="#f6a252" stroke-width=".5"/>
<path d="M44.500 42.500L50.800 47.200" stroke="#fff" stroke-width="5" stroke-linecap="round"/><circle cx="42.100" cy="39.200" r="5.900" fill="#fff"/><path d="M44.800 42.800L50.600 47" stroke="#5db5f0" stroke-width="2.600" stroke-linecap="round"/><circle cx="42.100" cy="39.200" r="4.300" fill="#e8637a"/><path d="M42.100 39.200V33.500h6z" fill="#fff" opacity=".0"/><path d="M43.200 40.200l2.800-3.400 1.500 4.400z" fill="#fff"/></svg><div class="lbl" style="top:85px;line-height:14px"><span id="L_mlist_0">Mailing Lists</span></div></div>
<div class="tile" style="left:1169px;top:654px;height:128px"><svg viewBox="0 0 54 54"><rect x="2" y="-.1" width="26" height="46.300" rx=".8" fill="#5b5ea6"/>
<rect x="6" y="2.200" width="18.400" height="7.500" fill="none" stroke="#7b7ec4" stroke-width="1.200"/><path d="M2 12H28" stroke="#7b7ec4" stroke-width="1.300"/>
<circle cx="15.200" cy="21.900" r="4.200" fill="#f4a86a"/><circle cx="15.200" cy="21.900" r="2.500" fill="#fff3e6"/>
<path d="M6 29H21.700M6 32.900H21.700M6 36.800H21.700" stroke="#8285c8" stroke-width="1.300"/>
<path d="M34.15 19.90A7.1 7.1 0 0 1 40.98 26.50M34.33 14.81A12.2 12.2 0 0 1 46.07 26.15M34.50 9.71A17.3 17.3 0 0 1 51.16 25.79" fill="none" stroke="#7fd6a0" stroke-width="1.600" stroke-linecap="round"/><circle cx="33.900" cy="27" r="3.200" fill="#5dc878"/>
<rect x="14.600" y="32.100" width="30.700" height="19.600" rx=".8" fill="#f9a95a"/><path d="M15.500 32.500L30 46.500 44.500 32.500" fill="none" stroke="#fbb672" stroke-width="1.400"/></svg><div class="lbl" style="top:85px;line-height:14px"><span id="L_mx_0">MX Records</span></div></div>
</div>
<div id="redbox"></div>

<div class="t" id="ya" style="left:1482px;top:191.2px;font-size:28px;color:#fff">Your Account</div>
<div class="t" id="usage" style="left:1483px;top:239.7px;font-size:16px">Usage, logs and statistics</div>
<div class="t" id="vm" style="left:1483px;top:286px;font-size:13px;font-weight:bold;color:#1c6690">• View more</div>

<div class="box" id="b1" style="top:329px;height:148px"></div>
<div class="box" id="b2" style="top:502px;height:267px"></div>
<div class="box" id="b3" style="top:794px;height:120px"></div>
<div class="t pl" id="disk" style="left:1502.5px;top:354px">Disk Space</div><svg class="abs" style="left:1591.5px;top:356.5px" width="13.6" height="13.6" viewBox="0 0 15 15"><g fill="none" stroke="#41afdf" stroke-width="1.15" stroke-linecap="round"><path d="M2.300 8.400A5.300 5.300 0 0 1 11.300 3.700"/><path d="M12.700 6.600A5.300 5.300 0 0 1 3.700 11.300"/></g><path d="M9.500 4.200l3 .4.100-3z" fill="#41afdf"/><path d="M5.500 10.800l-3-.4-.1 3z" fill="#41afdf"/></svg>
<div class="t pv" id="ob1" style="right:55px;top:355px">0 B</div>
<div class="bar" style="left:1502px;top:380.3px"></div>
<div class="t pl" id="bw" style="left:1502.5px;top:414px">Bandwidth</div>
<div class="t pv" id="ob2" style="right:55px;top:415px">0 B</div>
<div class="bar" style="left:1502px;top:441.0px"></div>
<div class="t pl" id="emails" style="left:1502.5px;top:526px">E-mails</div>
<div class="t pv" id="v1" style="right:55px;top:527px">1</div>
<div class="bar" style="left:1502px;top:553.0px"></div>
<div class="t pl" id="ftpacc" style="left:1502.5px;top:586px">FTP Accounts</div>
<div class="t pv" id="v2" style="right:55px;top:587px">1</div>
<div class="bar" style="left:1502px;top:613.0px"></div>
<div class="t pl" id="dbs" style="left:1502.5px;top:646px">Databases</div>
<div class="t pv" id="v3" style="right:55px;top:647px">0</div>
<div class="bar" style="left:1502px;top:673.0px"></div>
<div class="t pl" id="inode" style="left:1502.5px;top:706px">Inode</div>
<div class="t pv" id="v4" style="right:55px;top:707px">0</div>
<div class="bar" style="left:1502px;top:733.0px"></div>
<div class="t pl" id="dom3" style="left:1515.5px;top:818px">Domain</div>
<div class="t" id="docscom" style="left:1687.3px;top:818px;font-size:15px;color:#e6e6e6">docs.com</div>
<div class="t" id="editdom" style="left:1754.3px;top:818px;font-size:15px;font-weight:bold;color:#40b6f0">• Edit Domain</div>
<div class="t pl" id="phpver" style="left:1515.5px;top:856px">PHP Version</div>
<div class="t" id="php74" style="left:1690.4px;top:856px;font-size:15px;color:#e6e6e6">PHP 7.4 lsphp</div>
<div class="t" id="change" style="left:1789.9px;top:856px;font-size:15px;font-weight:bold;color:#40b6f0">• Change</div>
</body>
</html>
